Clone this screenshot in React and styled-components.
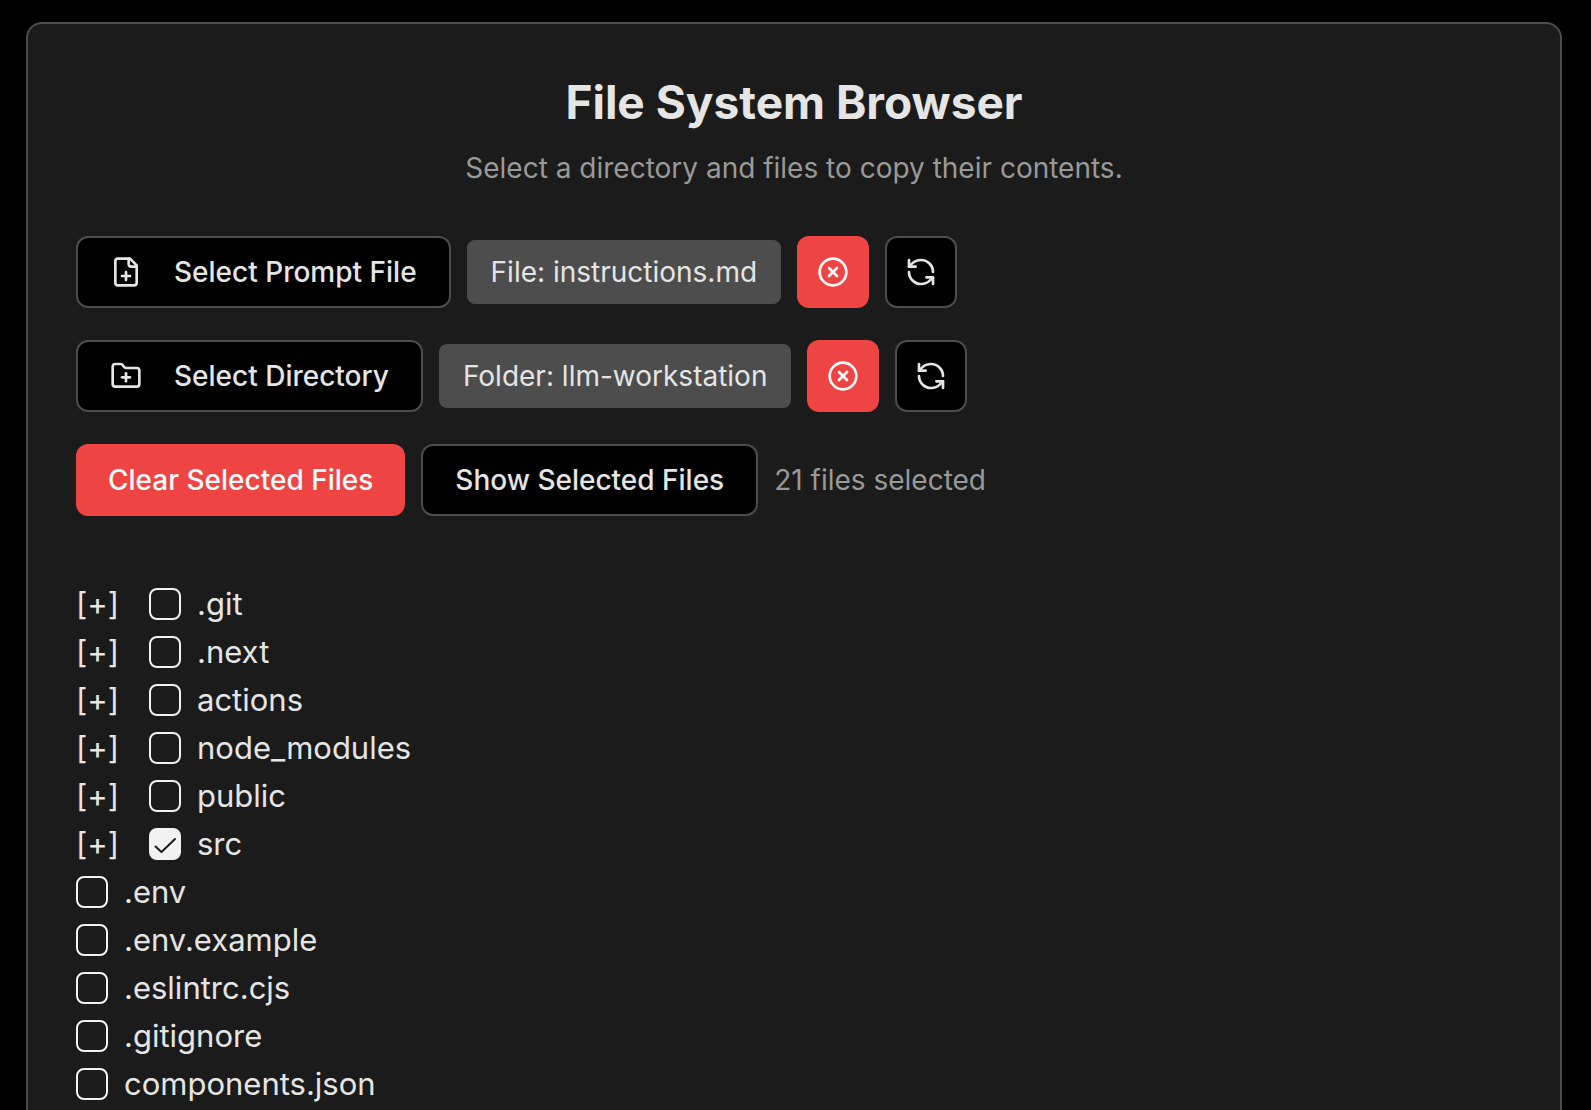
import React, { useState } from "react";
import styled, { createGlobalStyle, css } from "styled-components";
import { FolderPlus, CircleX, RefreshCcw } from "lucide-react";

const GlobalStyle = createGlobalStyle`
  *, *::before, *::after { box-sizing: border-box; }
  body {
    margin: 0;
    background: #000;
    color: #e5e5e5;
    font-family: Inter, "Liberation Sans", sans-serif;
  }
`;

const Page = styled.main`
  height: 100vh;
  overflow: hidden auto;
  scrollbar-width: none;
  padding: 22px 29px 22px 26px;
`;

const Card = styled.section`
  display: flex;
  flex-direction: column;
  gap: 48px;
  padding: 48px;
  border: 2px solid #4d4d4d;
  border-radius: 16px;
  background: #1b1b1b;
`;

const Header = styled.header`
  display: flex;
  flex-direction: column;
  gap: 16px;
  text-align: center;
`;

const Title = styled.h1`
  margin: 0;
  font-size: 46px;
  font-weight: 700;
  line-height: 60px;
`;

const Subtitle = styled.p`
  margin: 0;
  color: #999;
  font-size: 28px;
  line-height: 40px;
`;

const Body = styled.div`
  display: flex;
  flex-direction: column;
  gap: 64px;
`;

const Controls = styled.div`
  display: flex;
  flex-direction: column;
  gap: 32px;
`;

const ControlRow = styled.div`
  display: flex;
  align-items: center;
  gap: 16px;
`;

const Button = styled.button`
  display: inline-flex;
  align-items: center;
  justify-content: center;
  gap: 32px;
  height: 72px;
  padding: 0 32px;
  border: 2px solid #4d4d4d;
  border-radius: 12px;
  background: #000;
  color: #e5e5e5;
  font: inherit;
  font-size: 28px;
  font-weight: 500;
  line-height: 40px;
  white-space: nowrap;
  cursor: pointer;

  ${({ $danger }) => $danger && css`
    border: 0;
    background: #ef4444;
    color: #fafafa;
  `}

  ${({ $square }) => $square && css`
    width: 72px;
    padding: 0;
  `}
`;

const Tag = styled.span`
  padding: 12px 24px;
  border-radius: 8px;
  background: #4d4d4d;
  font-size: 28px;
  line-height: 40px;
  white-space: nowrap;
`;

const Count = styled.span`
  color: #999;
  font-size: 28px;
  line-height: 40px;
`;

const Tree = styled.ul`
  margin: 0;
  padding: 0;
  list-style: none;
`;

const TreeItem = styled.li`
  display: flex;
  align-items: center;
  gap: 32px;
  height: 48px;
`;

const Expander = styled.button`
  width: 41px;
  padding: 0;
  border: 0;
  background: none;
  color: inherit;
  font: inherit;
  font-size: 31px;
  line-height: 46px;
  white-space: nowrap;
  cursor: pointer;
`;

const ItemLabel = styled.label`
  display: flex;
  align-items: center;
  gap: 16px;
  font-size: 31px;
  line-height: 46px;
`;

const CheckWrap = styled.span`
  display: grid;
  width: 32px;
  height: 32px;

  > * { grid-area: 1 / 1; }
`;

const Checkbox = styled.input`
  appearance: none;
  width: 32px;
  height: 32px;
  margin: 0;
  border: 2px solid #f2f2f2;
  border-radius: 8px;

  &:checked { background: #f2f2f2; }
`;

const CheckMark = styled.svg`
  place-self: center;
  width: 32px;
  height: 32px;
  pointer-events: none;
`;

const entries = [
  { name: ".git", folder: true },
  { name: ".next", folder: true },
  { name: "actions", folder: true },
  { name: "node_modules", folder: true },
  { name: "public", folder: true },
  { name: "src", folder: true, selected: true },
  { name: ".env" },
  { name: ".env.example" },
  { name: ".eslintrc.cjs" },
  { name: ".gitignore" },
  { name: "components.json" },
];

function FilePlusIcon({ size }) {
  return (
    <svg width={size} height={size} viewBox="0 0 24 24" fill="none" stroke="currentColor" strokeWidth="2" strokeLinecap="round" strokeLinejoin="round" aria-hidden="true">
      <path d="M15 2H6a2 2 0 0 0-2 2v16a2 2 0 0 0 2 2h12a2 2 0 0 0 2-2V7Z" />
      <path d="M14 2v4a2 2 0 0 0 2 2h4" />
      <path d="M9 15h6" />
      <path d="M12 18v-6" />
    </svg>
  );
}

function Source({ icon: Icon, action, value, noun }) {
  return (
    <ControlRow>
      <Button type="button"><Icon size={32} aria-hidden="true" />{action}</Button>
      <Tag>{value}</Tag>
      <Button type="button" $danger $square aria-label={`Clear ${noun}`}><CircleX size={32} /></Button>
      <Button type="button" $square aria-label={`Reload ${noun}`}><RefreshCcw size={32} /></Button>
    </ControlRow>
  );
}

function Entry({ name, folder, selected }) {
  const [checked, setChecked] = useState(Boolean(selected));
  return (
    <TreeItem>
      {folder && <Expander type="button">[+]</Expander>}
      <ItemLabel>
        <CheckWrap>
          <Checkbox type="checkbox" checked={checked} onChange={(e) => setChecked(e.target.checked)} />
          {checked && (
            <CheckMark viewBox="0 0 32 32" fill="none" stroke="#1b1b1b" strokeWidth="2" strokeLinecap="round" strokeLinejoin="round" aria-hidden="true">
              <path d="M6.5 18.5 12.5 24 26 11" />
            </CheckMark>
          )}
        </CheckWrap>
        {name}
      </ItemLabel>
    </TreeItem>
  );
}

export default function App() {
  return (
    <Page>
      <GlobalStyle />
      <Card>
        <Header>
          <Title>File System Browser</Title>
          <Subtitle>Select a directory and files to copy their contents.</Subtitle>
        </Header>
        <Body>
          <Controls>
            <Source icon={FilePlusIcon} action="Select Prompt File" value="File: instructions.md" noun="file" />
            <Source icon={FolderPlus} action="Select Directory" value="Folder: llm-workstation" noun="folder" />
            <ControlRow>
              <Button type="button" $danger>Clear Selected Files</Button>
              <Button type="button">Show Selected Files</Button>
              <Count>21 files selected</Count>
            </ControlRow>
          </Controls>
          <Tree>
            {entries.map((entry) => <Entry key={entry.name} {...entry} />)}
          </Tree>
        </Body>
      </Card>
    </Page>
  );
}
